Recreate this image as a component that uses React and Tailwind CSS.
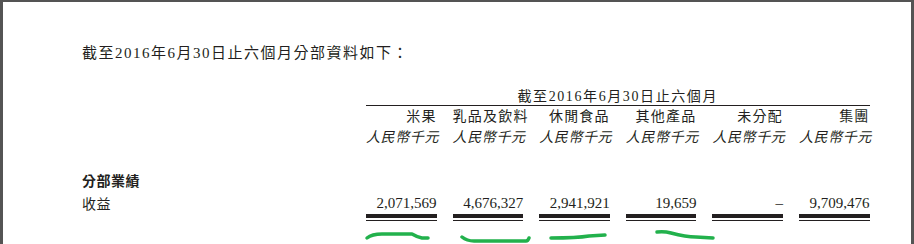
import React from 'react';

const serif = { fontFamily: '"Liberation Serif", "Noto Sans CJK TC", serif' };

const columns = [
  { name: '米果', value: '2,071,569' },
  { name: '乳品及飲料', value: '4,676,327' },
  { name: '休閒食品', value: '2,941,921' },
  { name: '其他產品', value: '19,659' },
  { name: '未分配', value: '–' },
  { name: '集團', value: '9,709,476' },
];

// hand-drawn green marks under the first four totals
const marks = [
  'M1 17 Q 6 13 16 13 L 46 13 Q 51 16 56 17 L 62 17',
  'M9 16 Q 14 20 21 20 L 73 20 Q 75 20 76 17',
  'M12 17 Q 38 17 50 15 L 66 14',
  'M31 11 Q 38 10 45 12 Q 60 16 70 16 L 87 17',
];

const App = () => {
  return (
    <div
      className="w-[914px] h-[244px] overflow-hidden bg-white border-t-2 border-l-[3px] border-r-[3px] border-[#545454] text-[#231f20]"
      style={serif}
    >
      <div className="pl-[79px] pt-[41px]">
        <p className="text-[15px] leading-[20px] tracking-[1.5px]">
          截至2016年6月30日止六個月分部資料如下：
        </p>

        <div className="mt-[26px] grid grid-cols-[268px_repeat(6,70.6px)] gap-x-4">
          {/* period title */}
          <div />
          <div className="col-span-6 border-b border-[#231f20] text-center text-[14px] leading-[16px] tracking-[1.6px]">
            截至2016年6月30日止六個月
          </div>

          {/* column names */}
          <div />
          {columns.map((c) => (
            <div key={c.name} className="pt-[3px] text-right text-[14px] leading-[16px] tracking-[1.2px] whitespace-nowrap">
              {c.name}
            </div>
          ))}

          {/* currency */}
          <div />
          {columns.map((c) => (
            <div key={c.name + '-unit'} className="mt-[5px] text-right text-[14px] leading-[16px] italic tracking-[0.6px] whitespace-nowrap">
              人民幣千元
            </div>
          ))}

          {/* section title */}
          <div className="col-span-7 mt-[28px] text-[14px] leading-[16px] font-bold tracking-[0.5px]">
            分部業績
          </div>

          {/* revenue row */}
          <div className="mt-[5px] pt-[2px] text-[14px] leading-[16px] tracking-[0.5px]">收益</div>
          {columns.map((c) => (
            <div key={c.name + '-val'} className="mt-[5px]">
              <div className="pb-[3px] border-b-4 border-[#231f20] text-right text-[15px] leading-[16px]">
                {c.value}
              </div>
              <div className="mt-[2px] h-px bg-[#231f20]" />
            </div>
          ))}

          {/* scribbles */}
          <div />
          {columns.map((c, i) => (
            <div key={c.name + '-mark'} className="h-[23px]">
              {marks[i] && (
                <svg width="71" height="23" viewBox="0 0 71 23" className="overflow-visible">
                  <path d={marks[i]} fill="none" stroke="#22b14c" strokeWidth="3.5" strokeLinecap="round" strokeLinejoin="round" />
                </svg>
              )}
            </div>
          ))}
        </div>
      </div>
    </div>
  );
};

export default App;
